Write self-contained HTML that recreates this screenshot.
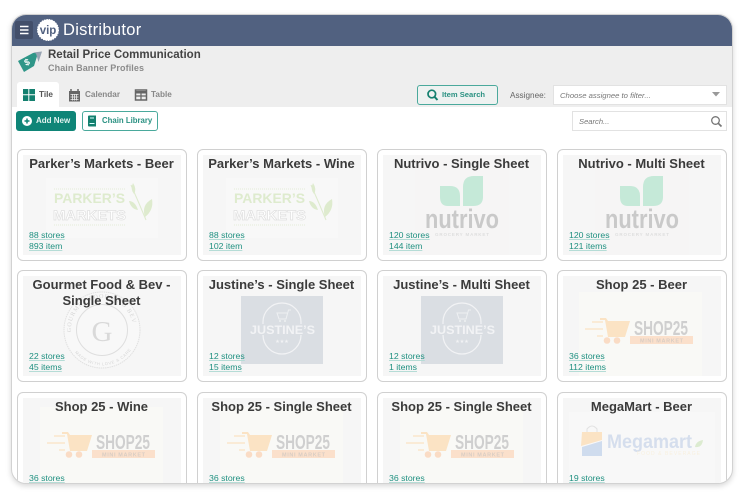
<!DOCTYPE html>
<html><head><meta charset="utf-8"><style>
html,body{margin:0;padding:0;width:750px;height:498px;overflow:hidden;background:#fff;font-family:"Liberation Sans",sans-serif}
*{box-sizing:border-box}
#f{position:absolute;left:11px;top:14px;width:722px;height:470px;border-radius:15px;overflow:hidden;background:#fff;border:1px solid #d2d2d2;box-shadow:0 2px 6px rgba(0,0,0,.16)}
#p{position:absolute;left:-12px;top:-15px;width:750px;height:498px}
.a{position:absolute;white-space:nowrap}
.c{position:absolute;width:170px;height:112px;background:#fff;border:1.5px solid #d0d0d0;border-radius:6px}
.i{position:absolute;left:4.5px;top:4.5px;width:158px;height:100px;background:#f6f6f6;overflow:hidden}
.i svg{position:absolute;left:0;top:0}
.t{position:absolute;left:2px;width:163px;top:5.5px;text-align:center;font-size:13px;line-height:16.500px;font-weight:bold;color:#3b3b3b}
.s{position:absolute;left:11px;font-size:8.700px;line-height:10px;color:#1f9080;text-decoration:underline;text-decoration-color:#b5dcd6}
.s1{top:79.500px}.s2{top:90.500px}
.lb{font-size:8.200px;font-weight:bold;color:#888}
</style></head><body>
<div id="f"><div id="p">
<div class="a" style="left:0;top:14px;width:750px;height:32px;background:#516180;box-shadow:0 1px 2px rgba(0,0,0,.3)"></div>
<div class="a" style="left:0;top:46px;width:750px;height:61px;background:#eeeeee"></div>
<div class="a" style="left:15px;top:21px;width:18px;height:18px;background:#434f6a;border-radius:2px"></div>
<svg class="a" style="left:15px;top:21px" width="18" height="18"><path d="M5 5.500H13.500M5 9H13.500M5 12.500H13.500" stroke="#fff" stroke-width="1.500"/></svg>
<svg class="a" style="left:37px;top:19px" width="22" height="22"><circle cx="11" cy="11" r="10.500" fill="#fff" stroke="#fff" stroke-dasharray="1.500 1" stroke-width="1"/><text x="11" y="14.800" text-anchor="middle" font-family="Liberation Sans" font-weight="bold" font-size="11.500" fill="#516180">vip</text></svg>
<div class="a" style="left:63px;top:20px;font-size:16.500px;line-height:20px;color:#fff;letter-spacing:.3px">Distributor</div>
<svg class="a" style="left:16px;top:50px" width="27" height="23"><path d="M2 11L17 3H22L18 16L8 22Z" fill="#2f9688"/><path d="M17 2.500L26 1.500L22.500 12L20 3.500Z" fill="#98a4b3"/><text x="10" y="16" font-family="Liberation Sans" font-weight="bold" font-size="9" fill="#fff" transform="rotate(-25 10 16)">$</text></svg>
<div class="a" style="left:48px;top:48px;font-size:11.500px;line-height:14px;font-weight:bold;color:#444">Retail Price Communication</div>
<div class="a" style="left:48px;top:62px;font-size:9px;line-height:12px;font-weight:bold;color:#8b8b8b;letter-spacing:.1px">Chain Banner Profiles</div>

<div class="a" style="left:17px;top:82px;width:42px;height:26px;background:#fff;border-radius:3px 3px 0 0"></div>
<svg class="a" style="left:22px;top:89px" width="14" height="12"><path d="M1 0H6.300V5.300H1ZM7.300 0H13V5.300H7.300ZM1 6.300H6.300V12H1ZM7.300 6.300H13V12H7.300Z" fill="#14806f"/></svg>
<div class="a lb" style="left:39px;top:90px;line-height:10px;color:#555">Tile</div>
<svg class="a" style="left:68px;top:88px" width="13" height="14"><path d="M1 3H12V13.500H1Z" fill="#666"/><path d="M3 1V4M10 1V4" stroke="#666" stroke-width="1.500"/><path d="M2.500 6.500H10.500M2.500 9H10.500M2.500 11.500H10.500M4.500 6V12.500M6.500 6V12.500M8.500 6V12.500" stroke="#eee" stroke-width=".8"/></svg>
<div class="a lb" style="left:85px;top:90px;line-height:10px">Calendar</div>
<svg class="a" style="left:134px;top:89px" width="14" height="12"><path d="M1.500 1H12.500V11H1.500Z" fill="#eee" stroke="#666" stroke-width="1.500"/><path d="M1.500 3.200H12.500" stroke="#666" stroke-width="2.500"/><path d="M1.500 7H12.500M7 3V11" stroke="#666" stroke-width="1.200"/></svg>
<div class="a lb" style="left:151px;top:90px;line-height:10px">Table</div>

<div class="a" style="left:16px;top:111px;width:60px;height:20px;background:#0f8577;border-radius:3px"></div>
<svg class="a" style="left:21px;top:115px" width="12" height="12"><circle cx="6" cy="6" r="5" fill="#fff"/><path d="M3.500 6H8.500M6 3.500V8.500" stroke="#0f8577" stroke-width="1.500"/></svg>
<div class="a" style="left:36px;top:116px;font-size:8px;line-height:10px;font-weight:bold;color:#e2f2ef">Add New</div>
<div class="a" style="left:82px;top:111px;width:76px;height:20px;background:#fff;border:1px solid #4aa99c;border-radius:3px"></div>
<svg class="a" style="left:87px;top:115px" width="10" height="12"><path d="M1 1.500Q1 .500 2 .500H9V11.500H2Q1 11.500 1 10.500Z" fill="#14806f"/><path d="M2.500 8.500H7.500M3 3H7" stroke="#dff" stroke-width="1"/></svg>
<div class="a" style="left:102px;top:116px;font-size:7.800px;line-height:10px;font-weight:bold;color:#2a9182">Chain Library</div>

<div class="a" style="left:417px;top:85px;width:81px;height:20px;background:#eef2f1;border:1px solid #4aa99c;border-radius:3px"></div>
<svg class="a" style="left:426px;top:88px" width="13" height="14"><circle cx="5.800" cy="6" r="3.800" fill="none" stroke="#14806f" stroke-width="1.700"/><path d="M8.500 8.800L11.500 12" stroke="#14806f" stroke-width="2"/></svg>
<div class="a" style="left:442px;top:90px;font-size:7.600px;line-height:10px;font-weight:bold;color:#2a9182">Item Search</div>
<div class="a" style="left:510px;top:90px;font-size:8.200px;line-height:11px;color:#666">Assignee:</div>
<div class="a" style="left:553px;top:85px;width:174px;height:20px;background:#fff;border:1px solid #e2e2e2"></div>
<div class="a" style="left:560px;top:90px;font-size:7.700px;line-height:11px;font-style:italic;color:#777">Choose assignee to filter...</div>
<svg class="a" style="left:712px;top:92px" width="9" height="6"><path d="M0 0H8L4 4.500Z" fill="#999"/></svg>
<div class="a" style="left:572px;top:111px;width:155px;height:20px;background:#fff;border:1px solid #e2e2e2"></div>
<div class="a" style="left:579px;top:116px;font-size:7.600px;line-height:11px;font-style:italic;color:#777">Search...</div>
<svg class="a" style="left:710px;top:115px" width="13" height="13"><circle cx="5.500" cy="5.500" r="3.800" fill="none" stroke="#777" stroke-width="1.300"/><path d="M8.300 8.300L11.500 11.500" stroke="#777" stroke-width="1.700"/></svg>

<!-- ROW 1 -->
<div class="c" style="left:17px;top:149px"><div class="i"><svg width="158" height="100"><rect x="23" y="23" width="112" height="60" fill="#f8f8f8"/><path d="M31 34H102M31 70H102" stroke="#e4ecd8" stroke-dasharray="1 1"/><text x="31" y="48" font-family="Liberation Sans" font-weight="bold" font-size="14" textLength="71" lengthAdjust="spacingAndGlyphs" fill="#deebce">PARKER’S</text><text x="30" y="65" font-family="Liberation Sans" font-weight="bold" font-size="14" textLength="73" lengthAdjust="spacingAndGlyphs" fill="#fff" stroke="#e0e0e0" stroke-width=".7">MARKETS</text><path d="M108 30Q116 48 123 65" fill="none" stroke="#deebce"/><path d="M110 28Q114 34 111 39Q107 34 110 28ZM106 46Q112 46 115 55Q108 54 106 46ZM129 44Q131 55 122 62Q118 50 129 44Z" fill="#deebce"/></svg></div><div class="t">Parker’s Markets - Beer</div><div class="s s1">88 stores</div><div class="s s2">893 item</div></div>
<div class="c" style="left:197px;top:149px"><div class="i"><svg width="158" height="100"><rect x="23" y="23" width="112" height="60" fill="#f8f8f8"/><path d="M31 34H102M31 70H102" stroke="#e4ecd8" stroke-dasharray="1 1"/><text x="31" y="48" font-family="Liberation Sans" font-weight="bold" font-size="14" textLength="71" lengthAdjust="spacingAndGlyphs" fill="#deebce">PARKER’S</text><text x="30" y="65" font-family="Liberation Sans" font-weight="bold" font-size="14" textLength="73" lengthAdjust="spacingAndGlyphs" fill="#fff" stroke="#e0e0e0" stroke-width=".7">MARKETS</text><path d="M108 30Q116 48 123 65" fill="none" stroke="#deebce"/><path d="M110 28Q114 34 111 39Q107 34 110 28ZM106 46Q112 46 115 55Q108 54 106 46ZM129 44Q131 55 122 62Q118 50 129 44Z" fill="#deebce"/></svg></div><div class="t">Parker’s Markets - Wine</div><div class="s s1">88 stores</div><div class="s s2">102 item</div></div>
<div class="c" style="left:377px;top:149px"><div class="i"><svg width="158" height="100"><rect x="32" y="0" width="94" height="100" fill="#f6f5f5"/><path d="M57 31H67Q77 31 77 41V51H65Q57 51 57 42Z" fill="#c5e9d8"/><path d="M100 21V42Q100 51 90 51H80V32Q80 21 91 21Z" fill="#c5e9d8"/><text x="42" y="73" font-family="Liberation Sans" font-weight="bold" font-size="27" textLength="74" lengthAdjust="spacingAndGlyphs" fill="#c9c9c9">nutrivo</text><text x="52" y="81" font-family="Liberation Sans" font-weight="bold" font-size="4.500" textLength="54" fill="#dedede">GROCERY MARKET</text></svg></div><div class="t">Nutrivo - Single Sheet</div><div class="s s1">120 stores</div><div class="s s2">144 item</div></div>
<div class="c" style="left:557px;top:149px"><div class="i"><svg width="158" height="100"><rect x="32" y="0" width="94" height="100" fill="#f6f5f5"/><path d="M57 31H67Q77 31 77 41V51H65Q57 51 57 42Z" fill="#c5e9d8"/><path d="M100 21V42Q100 51 90 51H80V32Q80 21 91 21Z" fill="#c5e9d8"/><text x="42" y="73" font-family="Liberation Sans" font-weight="bold" font-size="27" textLength="74" lengthAdjust="spacingAndGlyphs" fill="#c9c9c9">nutrivo</text><text x="52" y="81" font-family="Liberation Sans" font-weight="bold" font-size="4.500" textLength="54" fill="#dedede">GROCERY MARKET</text></svg></div><div class="t">Nutrivo - Multi Sheet</div><div class="s s1">120 stores</div><div class="s s2">121 items</div></div>

<!-- ROW 2 -->
<div class="c" style="left:17px;top:270px"><div class="i"><svg width="158" height="100"><circle cx="79" cy="54" r="38" fill="#f8f8f8" stroke="#e0e0e0" stroke-dasharray="1.500 .7"/><circle cx="79" cy="54" r="25.500" fill="none" stroke="#dedede"/><text x="79" y="65" text-anchor="middle" font-family="Liberation Serif" font-size="29" fill="#d9d9d9">G</text><path id="g1" d="M50 64A31 31 0 1 1 108 64" fill="none"/><path id="g2" d="M46 66A35 35 0 0 0 112 66" fill="none"/><text font-family="Liberation Serif" font-size="6" letter-spacing="1" fill="#d5d5d5"><textPath href="#g1" startOffset="8">GOURMET FOOD AND BEV</textPath></text><text font-family="Liberation Sans" font-size="4" letter-spacing=".7" fill="#d5d5d5"><textPath href="#g2" startOffset="12">MADE WITH LOVE &amp; CARE</textPath></text></svg></div><div class="t">Gourmet Food &amp; Bev - Single Sheet</div><div class="s s1">22 stores</div><div class="s s2">45 items</div></div>
<div class="c" style="left:197px;top:270px"><div class="i"><svg width="158" height="100"><rect x="38" y="20" width="82" height="68" fill="#dadee3"/><path d="M60 48V46A19 19 0 0 1 98 46V48M60 59A19 19 0 0 0 98 59" fill="none" stroke="#f2f3f5" stroke-width="1.200"/><path d="M88 34H85.500L83 43H76L74 37H84" fill="none" stroke="#eef0f2"/><circle cx="77" cy="45" r="1" fill="#eef0f2"/><circle cx="82" cy="45" r="1" fill="#eef0f2"/><text x="47" y="58" font-family="Liberation Sans" font-weight="bold" font-size="11.500" textLength="65" lengthAdjust="spacingAndGlyphs" fill="#f2f3f5">JUSTINE’S</text><text x="79" y="67" text-anchor="middle" font-family="DejaVu Sans" font-size="5" fill="#f2f3f5">★★★</text></svg></div><div class="t">Justine’s - Single Sheet</div><div class="s s1">12 stores</div><div class="s s2">15 items</div></div>
<div class="c" style="left:377px;top:270px"><div class="i"><svg width="158" height="100"><rect x="38" y="20" width="82" height="68" fill="#dadee3"/><path d="M60 48V46A19 19 0 0 1 98 46V48M60 59A19 19 0 0 0 98 59" fill="none" stroke="#f2f3f5" stroke-width="1.200"/><path d="M88 34H85.500L83 43H76L74 37H84" fill="none" stroke="#eef0f2"/><circle cx="77" cy="45" r="1" fill="#eef0f2"/><circle cx="82" cy="45" r="1" fill="#eef0f2"/><text x="47" y="58" font-family="Liberation Sans" font-weight="bold" font-size="11.500" textLength="65" lengthAdjust="spacingAndGlyphs" fill="#f2f3f5">JUSTINE’S</text><text x="79" y="67" text-anchor="middle" font-family="DejaVu Sans" font-size="5" fill="#f2f3f5">★★★</text></svg></div><div class="t">Justine’s - Multi Sheet</div><div class="s s1">12 stores</div><div class="s s2">1 items</div></div>
<div class="c" style="left:557px;top:270px"><div class="i"><svg width="158" height="100"><rect x="16" y="16" width="123" height="84" fill="#f9f9f6"/><g transform="translate(23,42)"><path d="M14 0H20L22 3H44L39 19H22L19 2H14Z" fill="#fbe3c4"/><path d="M6 4H17M-1 11H17M11 18H17" stroke="#fbe3c4" stroke-width="1.300"/><circle cx="21" cy="22.500" r="3.300" fill="#fadcc5"/><circle cx="31" cy="22.500" r="3.300" fill="#fadcc5"/><text x="48" y="17" font-family="Liberation Sans" font-weight="bold" font-size="20.500" textLength="54" lengthAdjust="spacingAndGlyphs" fill="#cfcfcf">SHOP25</text><rect x="44" y="18" width="63" height="8" fill="#fbe0cb"/><text x="54" y="24.500" font-family="Liberation Sans" font-weight="bold" font-size="5.500" textLength="43" fill="#d9cdc4">MINI MARKET</text></g></svg></div><div class="t">Shop 25 - Beer</div><div class="s s1">36 stores</div><div class="s s2">112 items</div></div>

<!-- ROW 3 -->
<div class="c" style="left:17px;top:392px"><div class="i"><svg width="158" height="100"><rect x="17" y="9" width="123" height="91" fill="#f9f9f6"/><g transform="translate(25,34)"><path d="M14 0H20L22 3H44L39 19H22L19 2H14Z" fill="#fbe3c4"/><path d="M6 4H17M-1 11H17M11 18H17" stroke="#fbe3c4" stroke-width="1.300"/><circle cx="21" cy="22.500" r="3.300" fill="#fadcc5"/><circle cx="31" cy="22.500" r="3.300" fill="#fadcc5"/><text x="48" y="17" font-family="Liberation Sans" font-weight="bold" font-size="20.500" textLength="54" lengthAdjust="spacingAndGlyphs" fill="#cfcfcf">SHOP25</text><rect x="44" y="18" width="63" height="8" fill="#fbe0cb"/><text x="54" y="24.500" font-family="Liberation Sans" font-weight="bold" font-size="5.500" textLength="43" fill="#d9cdc4">MINI MARKET</text></g></svg></div><div class="t">Shop 25 - Wine</div><div class="s s1">36 stores</div></div>
<div class="c" style="left:197px;top:392px"><div class="i"><svg width="158" height="100"><rect x="17" y="9" width="123" height="91" fill="#f9f9f6"/><g transform="translate(25,34)"><path d="M14 0H20L22 3H44L39 19H22L19 2H14Z" fill="#fbe3c4"/><path d="M6 4H17M-1 11H17M11 18H17" stroke="#fbe3c4" stroke-width="1.300"/><circle cx="21" cy="22.500" r="3.300" fill="#fadcc5"/><circle cx="31" cy="22.500" r="3.300" fill="#fadcc5"/><text x="48" y="17" font-family="Liberation Sans" font-weight="bold" font-size="20.500" textLength="54" lengthAdjust="spacingAndGlyphs" fill="#cfcfcf">SHOP25</text><rect x="44" y="18" width="63" height="8" fill="#fbe0cb"/><text x="54" y="24.500" font-family="Liberation Sans" font-weight="bold" font-size="5.500" textLength="43" fill="#d9cdc4">MINI MARKET</text></g></svg></div><div class="t">Shop 25 - Single Sheet</div><div class="s s1">36 stores</div></div>
<div class="c" style="left:377px;top:392px"><div class="i"><svg width="158" height="100"><rect x="17" y="9" width="123" height="91" fill="#f9f9f6"/><g transform="translate(24,34)"><path d="M14 0H20L22 3H44L39 19H22L19 2H14Z" fill="#fbe3c4"/><path d="M6 4H17M-1 11H17M11 18H17" stroke="#fbe3c4" stroke-width="1.300"/><circle cx="21" cy="22.500" r="3.300" fill="#fadcc5"/><circle cx="31" cy="22.500" r="3.300" fill="#fadcc5"/><text x="48" y="17" font-family="Liberation Sans" font-weight="bold" font-size="20.500" textLength="54" lengthAdjust="spacingAndGlyphs" fill="#cfcfcf">SHOP25</text><rect x="44" y="18" width="63" height="8" fill="#fbe0cb"/><text x="54" y="24.500" font-family="Liberation Sans" font-weight="bold" font-size="5.500" textLength="43" fill="#d9cdc4">MINI MARKET</text></g></svg></div><div class="t">Shop 25 - Single Sheet</div><div class="s s1">36 stores</div></div>
<div class="c" style="left:557px;top:392px"><div class="i"><svg width="158" height="100"><rect x="6" y="14" width="146" height="86" fill="#f8f8f8"/><path d="M19 34H39V42L18 48Z" fill="#fbe3c4"/><path d="M19 49L39 43V58H19Z" fill="#cfdcee"/><path d="M24 34V31Q29 25 34 31V34" fill="none" stroke="#e2e2e2"/><text x="44" y="50" font-family="Liberation Sans" font-weight="bold" font-size="19" textLength="85" lengthAdjust="spacingAndGlyphs" fill="#d5deed">Megamart</text><path d="M132 49Q133 43 140 42Q139 50 132 49Z" fill="#dcebd0"/><text x="74" y="57" font-family="Liberation Sans" font-size="5" textLength="63" fill="#f8f0df">FOOD &amp; BEVERAGE</text></svg></div><div class="t">MegaMart - Beer</div><div class="s s1">19 stores</div></div>
</div></div>
</body></html>
